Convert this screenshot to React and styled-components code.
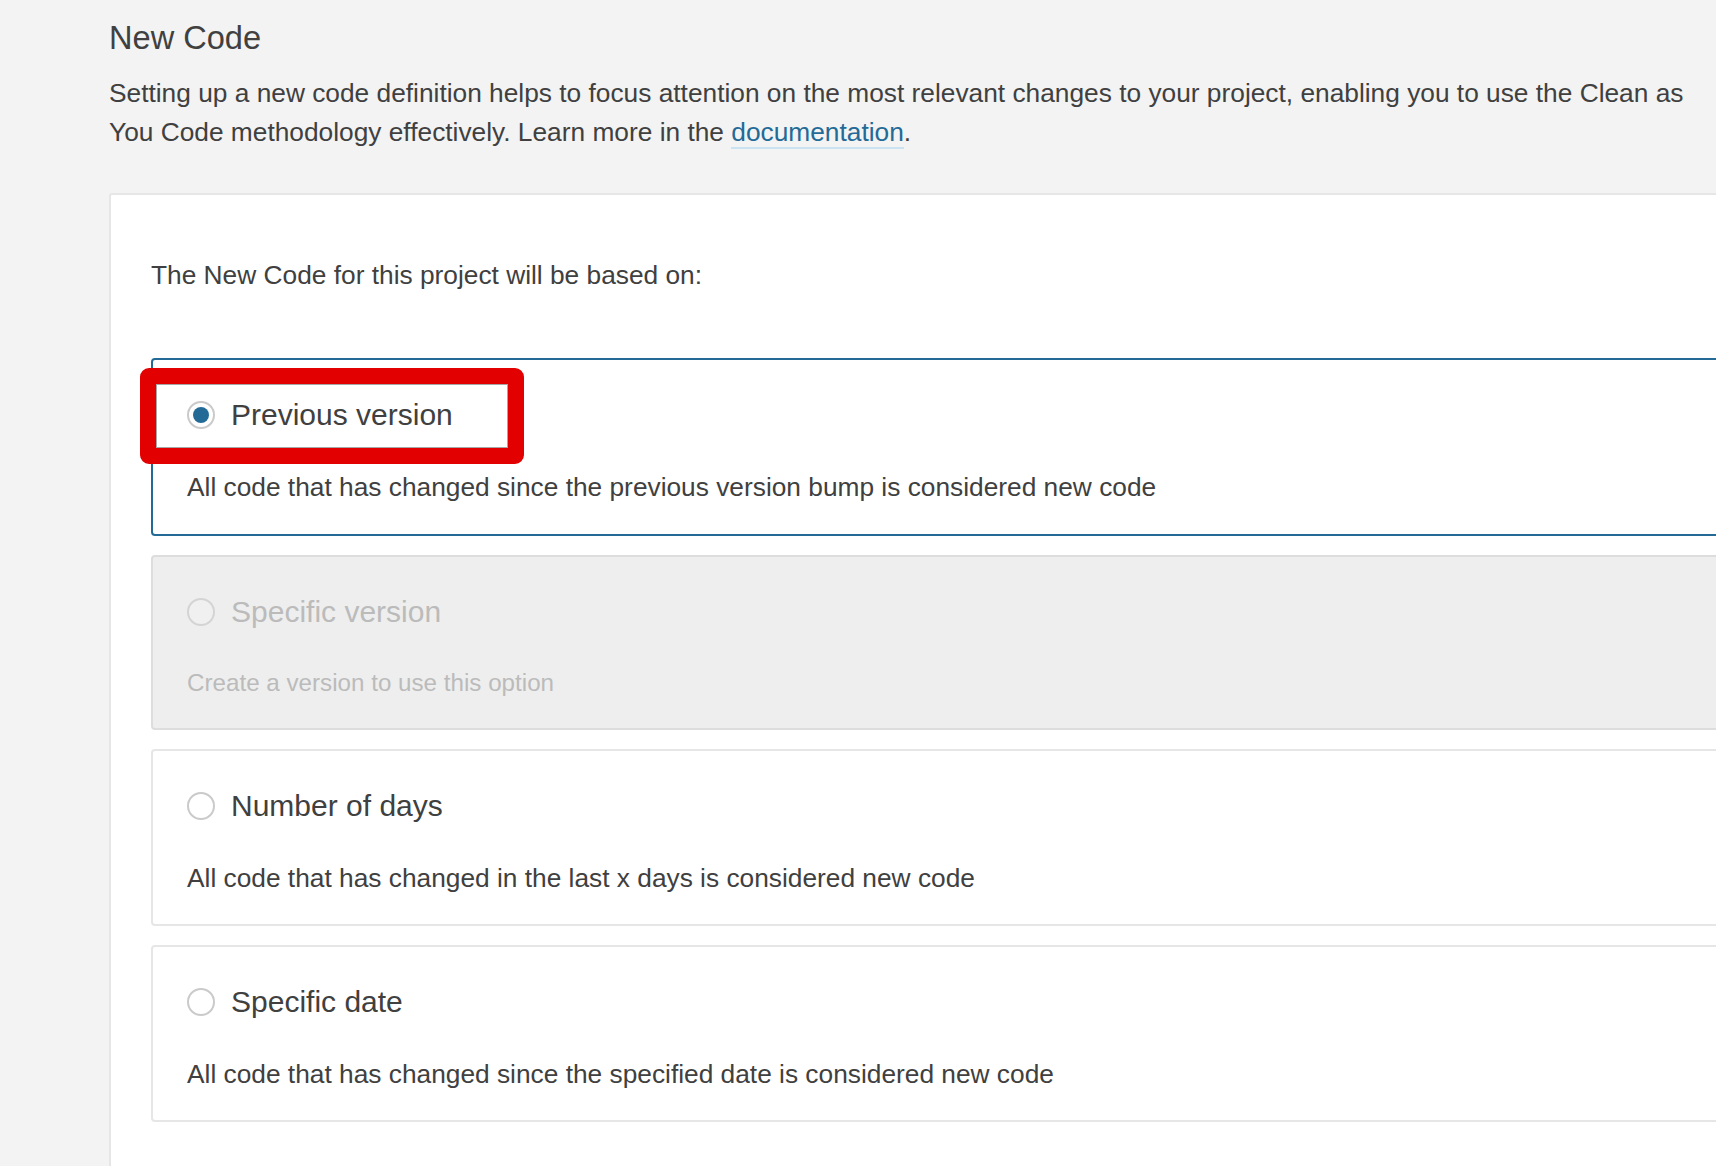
import React from "react";
import styled, { createGlobalStyle, css } from "styled-components";

const GlobalStyle = createGlobalStyle`
  html, body {
    margin: 0;
    padding: 0;
    background: #f3f3f3;
    overflow: hidden;
  }
  body {
    font-family: "Liberation Sans", Arial, Helvetica, sans-serif;
    color: #404040;
  }
`;

const options = [
  {
    key: "previous_version",
    title: "Previous version",
    description:
      "All code that has changed since the previous version bump is considered new code",
    selected: true,
    highlighted: true,
  },
  {
    key: "specific_version",
    title: "Specific version",
    description: "Create a version to use this option",
    disabled: true,
  },
  {
    key: "number_of_days",
    title: "Number of days",
    description: "All code that has changed in the last x days is considered new code",
  },
  {
    key: "specific_date",
    title: "Specific date",
    description: "All code that has changed since the specified date is considered new code",
  },
];

function RadioOption({ option }) {
  const { title, description, selected, disabled, highlighted } = option;
  return (
    <OptionBox $selected={selected} $disabled={disabled}>
      <OptionHeader>
        <Radio $checked={selected} $disabled={disabled} />
        <OptionTitle $disabled={disabled}>{title}</OptionTitle>
      </OptionHeader>
      <OptionDescription $disabled={disabled}>{description}</OptionDescription>
      {highlighted && <Highlight />}
    </OptionBox>
  );
}

export default function App() {
  return (
    <>
      <GlobalStyle />
      <Page>
        <Heading>New Code</Heading>
        <Intro>
          Setting up a new code definition helps to focus attention on the most relevant
          changes to your project, enabling you to use the Clean as You Code methodology
          effectively. Learn more in the <DocLink href="#">documentation</DocLink>.
        </Intro>
        <Card>
          <Lead>The New Code for this project will be based on:</Lead>
          <OptionList>
            {options.map((option) => (
              <RadioOption key={option.key} option={option} />
            ))}
          </OptionList>
        </Card>
      </Page>
    </>
  );
}

const Page = styled.div`
  padding: 18px 0 0 109px;
  box-sizing: border-box;
  min-height: 100vh;
`;

const Heading = styled.h1`
  margin: 0;
  font-size: 32.6px;
  line-height: 40px;
  font-weight: 400;
  color: #404040;
`;

const Intro = styled.p`
  margin: 16px 0 0;
  font-size: 26.3px;
  line-height: 39px;
  color: #404040;
`;

const DocLink = styled.a`
  color: #236a97;
  text-decoration: none;
  border-bottom: 2px solid #cae3f2;
`;

const Card = styled.div`
  margin: 41px -140px 0 0;
  padding: 61px 40px 80px 40px;
  background: #fff;
  border: 2px solid #e6e6e6;
  border-radius: 3px;
`;

const Lead = styled.p`
  margin: 0;
  font-size: 26.3px;
  line-height: 39px;
  color: #404040;
`;

const OptionList = styled.div`
  display: flex;
  flex-direction: column;
  gap: 19px;
  margin-top: 63px;
`;

const OptionBox = styled.div`
  position: relative;
  padding: 28px 30px 26px 34px;
  border: 2px solid #e6e6e6;
  border-radius: 4px;
  background: #fff;

  ${(p) =>
    p.$selected &&
    css`
      border-color: #236a97;
      padding-bottom: 27px;
    `}

  ${(p) =>
    p.$disabled &&
    css`
      background: #eee;
      border-color: #ddd;
    `}
`;

const OptionHeader = styled.div`
  display: flex;
  align-items: center;
  gap: 16px;
  height: 54px;
`;

const Radio = styled.span`
  flex: none;
  box-sizing: border-box;
  width: 28px;
  height: 28px;
  border-radius: 50%;
  border: 2px solid ${(p) => (p.$disabled ? "#d4d4d4" : "#cacaca")};
  background: ${(p) => (p.$disabled ? "#f0f0f0" : "#fff")};
  display: flex;
  align-items: center;
  justify-content: center;

  &::after {
    content: "";
    display: ${(p) => (p.$checked ? "block" : "none")};
    width: 16px;
    height: 16px;
    border-radius: 50%;
    background: #236a97;
  }
`;

const OptionTitle = styled.span`
  font-size: 30px;
  line-height: 54px;
  color: ${(p) => (p.$disabled ? "#bbb" : "#404040")};
`;

const OptionDescription = styled.p`
  margin: ${(p) => (p.$disabled ? "24px" : "26px")} 0 0;
  font-size: ${(p) => (p.$disabled ? "24.2px" : "26.3px")};
  line-height: 39px;
  color: ${(p) => (p.$disabled ? "#bbb" : "#404040")};
`;

const Highlight = styled.div`
  position: absolute;
  left: -13px;
  top: 8px;
  width: 384px;
  height: 96px;
  box-sizing: border-box;
  border: 16px solid #e30000;
  border-radius: 9px;
  box-shadow: inset 0 0 0 1px rgba(0, 0, 0, 0.35);
  pointer-events: none;
`;
